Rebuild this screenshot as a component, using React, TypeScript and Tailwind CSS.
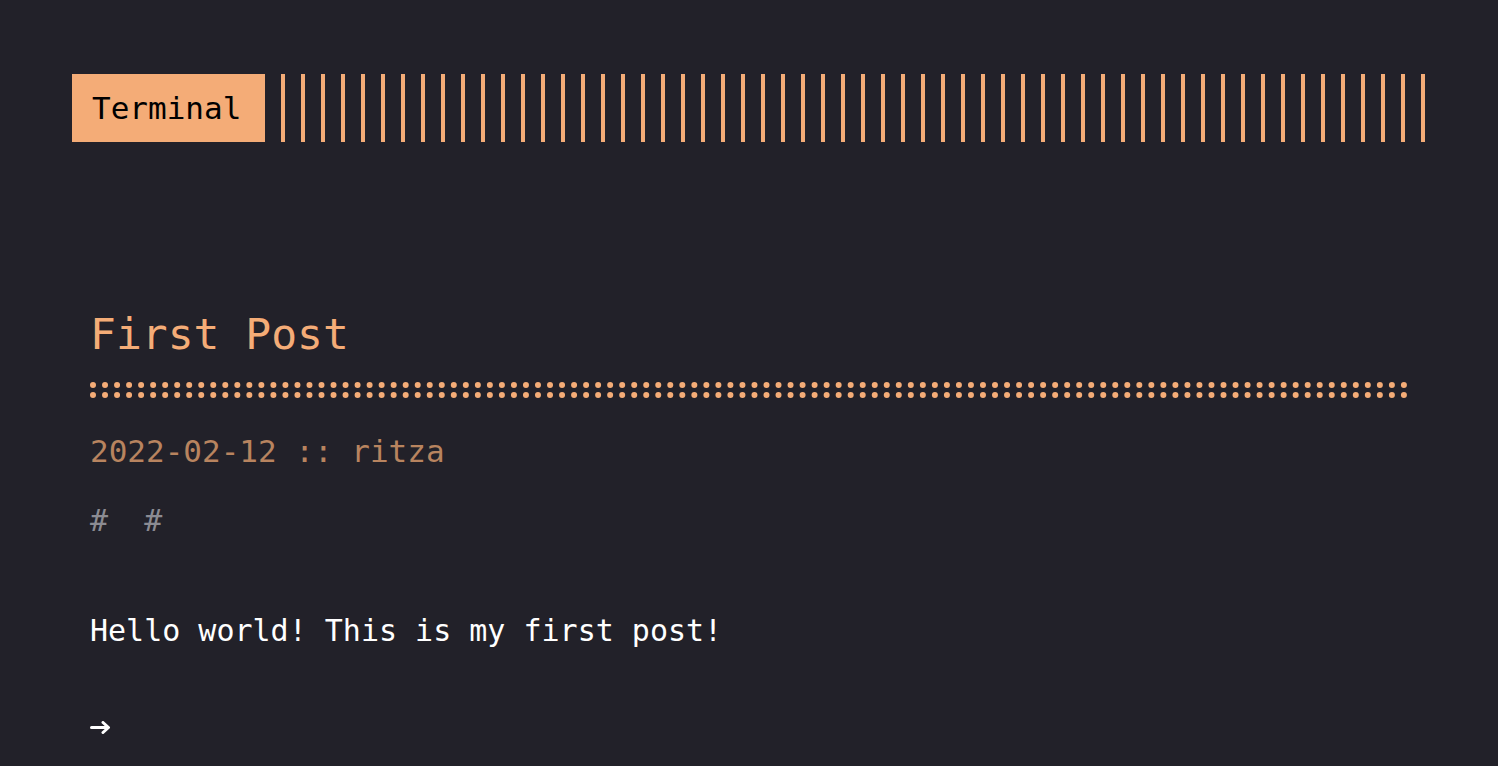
export default function App() {
  return (
    <div className="min-h-[766px] w-full bg-[#222129] pt-[74px] font-['DejaVu_Sans_Mono',monospace] text-white">
      {/* Header */}
      <header className="flex h-[68px] px-[72px]">
        <div className="flex h-[68px] w-[193px] shrink-0 items-center bg-[#f4ac77] pl-5 text-[31px] leading-[31px] text-black">
          Terminal
        </div>
        <div className="ml-4 h-[68px] flex-1 bg-[repeating-linear-gradient(90deg,#f4ac77,#f4ac77_4px,transparent_4px,transparent_20px)]"></div>
      </header>

      {/* Post */}
      <main className="px-[90px] pt-[171px]">
        <h1 className="text-[43px] leading-[43px] text-[#f4ac77]">First Post</h1>
        <div className="mt-[26px] border-b-[6px] border-dotted border-[#f4ac77]"></div>
        <div className="mt-[4px] border-b-[6px] border-dotted border-[#f4ac77]"></div>

        <div className="mt-[38px] text-[31px] leading-[31px] text-[#b8845f]">
          2022-02-12 :: ritza
        </div>

        <div className="mt-[39px] whitespace-pre text-[30px] leading-[30px] text-[#8b8b92]">
          {"#  #"}
        </div>

        <p className="mt-[80px] text-[30px] leading-[30px] text-white">
          Hello world! This is my first post!
        </p>

        <div className="mt-[75px] flex">
          <svg width="21" height="13" viewBox="0 0 21 13" fill="none">
            <path
              d="M1.5 6.5H18M13 1.5L18.5 6.5L13 11.5"
              stroke="white"
              strokeWidth="3"
              strokeLinecap="round"
              strokeLinejoin="round"
            />
          </svg>
        </div>
      </main>
    </div>
  );
}
